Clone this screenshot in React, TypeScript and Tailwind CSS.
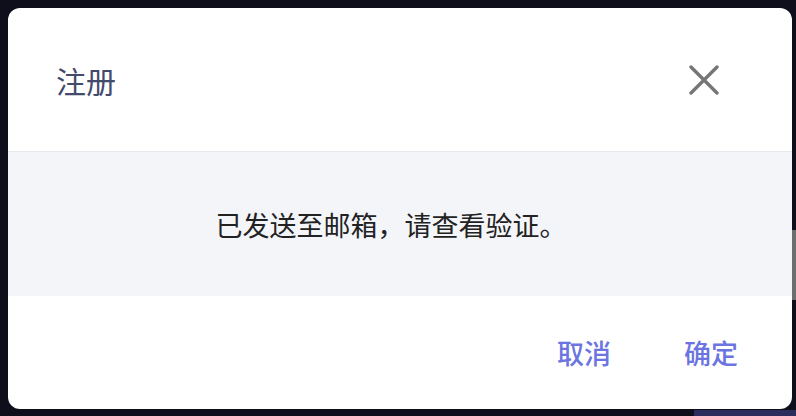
import React from 'react';

const CloseIcon = () => (
  <svg width="30" height="30" viewBox="0 0 30 30" fill="none" aria-hidden="true">
    <path d="M2 2L28 28M28 2L2 28" stroke="#767676" strokeWidth="3.4" strokeLinecap="round" />
  </svg>
);

const App = () => {
  return (
    <div
      className="relative w-[796px] h-[416px] overflow-hidden bg-[#0e0f1a] p-2"
      style={{ fontFamily: '"Noto Sans CJK SC", "Noto Sans", sans-serif' }}
    >
      {/* page behind the overlay */}
      <div className="absolute right-0 top-[230px] w-[4px] h-[70px] bg-[#6e6e6e]"></div>
      <div className="absolute right-0 bottom-0 w-[102px] h-[6px] bg-[#2b2d5c]"></div>

      {/* Dialog */}
      <div className="relative w-[784px] h-[401px] bg-white rounded-[12px] overflow-hidden flex flex-col">
        {/* Header */}
        <div className="h-[144px] flex items-center justify-between pl-[48px] pr-[73px] border-b border-[#e9eaef]">
          <span className="text-[30px] leading-none text-[#434a6b]">注册</span>
          <button className="w-[30px] h-[30px] flex items-center justify-center">
            <CloseIcon />
          </button>
        </div>

        {/* Body */}
        <div className="h-[144px] bg-[#f4f5f9] flex items-center justify-center pr-[18px]">
          <p className="text-[27px] leading-none text-[#222222]">已发送至邮箱，请查看验证。</p>
        </div>

        {/* Footer */}
        <div className="flex-1 flex items-center justify-end gap-[73px] pr-[54px]">
          <button className="text-[27px] leading-none font-medium text-[#6b74e0]">取消</button>
          <button className="text-[27px] leading-none font-medium text-[#6b74e0]">确定</button>
        </div>
      </div>
    </div>
  );
};

export default App;
